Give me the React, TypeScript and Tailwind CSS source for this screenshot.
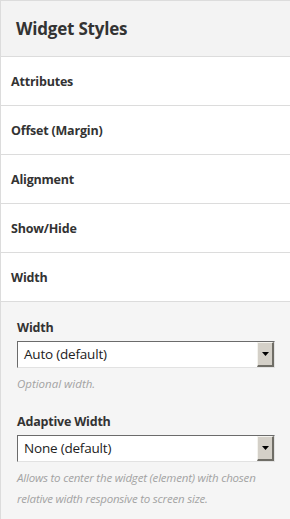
const ROWS = ["Attributes", "Offset (Margin)", "Alignment", "Show/Hide", "Width"];

function FakeSelect({ value }: { value: string }) {
  return (
    <div className="flex h-[27px] w-[258px] border-t border-l border-t-[#6b6b6b] border-l-[#6b6b6b] border-b border-r border-b-[#e2e2e2] border-r-[#e2e2e2] bg-white">
      <div className="flex flex-1 items-center pl-[6px] text-[13.5px] tracking-[-0.2px] text-[#222]">
        {value}
      </div>
      <div className="flex w-[17px] items-center justify-center border-t border-l border-t-[#f4f3ee] border-l-[#f4f3ee] border-b-2 border-r-2 border-b-[#6f6d66] border-r-[#6f6d66] bg-[#d4d0c8]">
        <svg width="7" height="4" viewBox="0 0 7 4">
          <path d="M0 0h7L3.5 4z" fill="#000" />
        </svg>
      </div>
    </div>
  );
}

export default function App() {
  return (
    <div
      className="h-[519px] w-[290px] overflow-hidden border-t border-l border-[#dcdcdc] bg-white text-[#333]"
      style={{ fontFamily: '"Open Sans", "Noto Sans", sans-serif' }}
    >
      <div className="flex h-[56px] items-center border-b border-[#dcdcdc] bg-[#f3f3f3] pl-[15px] text-[17px] font-bold tracking-[-0.2px]">
        Widget Styles
      </div>
      {ROWS.map((r) => (
        <div
          key={r}
          className="flex h-[49px] items-center border-b border-[#dcdcdc] pl-[10px] pt-[2px] text-[12.5px] font-bold tracking-[-0.2px]"
        >
          {r}
        </div>
      ))}
      <div className="h-full bg-[#f5f5f5] px-[16px] pt-[17px] pb-4">
        <div className="text-[12.5px] font-bold leading-[18px] tracking-[-0.2px]">Width</div>
        <div className="mt-[4px]">
          <FakeSelect value="Auto (default)" />
        </div>
        <div className="mt-[5px] text-[11.5px] italic leading-[21px] text-[#a3a3a3]">
          Optional width.
        </div>
        <div className="mt-[19px] text-[12.5px] font-bold leading-[18px] tracking-[-0.2px]">
          Adaptive Width
        </div>
        <div className="mt-[4px]">
          <FakeSelect value="None (default)" />
        </div>
        <div className="mt-[5px] text-[11.5px] italic leading-[21px] tracking-[-0.2px] text-[#a3a3a3]">
          Allows to center the widget (element) with chosen relative width responsive to screen size.
        </div>
      </div>
    </div>
  );
}
